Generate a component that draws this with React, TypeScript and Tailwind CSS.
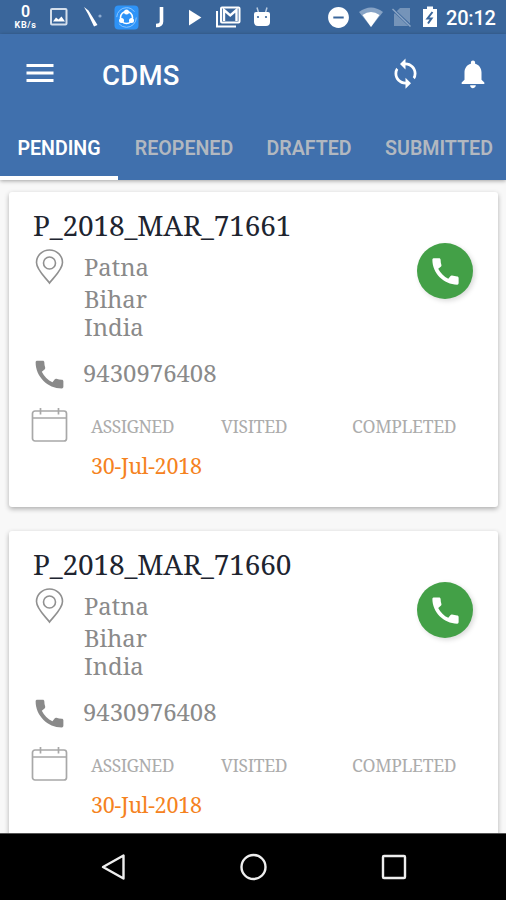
import React from 'react';
import { MdCall, MdMenu, MdNotifications, MdSync, MdPlayArrow, MdDoNotDisturbOn } from 'react-icons/md';

interface Visit {
  id: string;
  address: string[];
  phone: string;
  assigned: string;
}

const visits: Visit[] = [
  { id: 'P_2018_MAR_71661', address: ['Patna', 'Bihar', 'India'], phone: '9430976408', assigned: '30-Jul-2018' },
  { id: 'P_2018_MAR_71660', address: ['Patna', 'Bihar', 'India'], phone: '9430976408', assigned: '30-Jul-2018' },
];

const tabs = [
  { label: 'PENDING', width: 'w-[118px]' },
  { label: 'REOPENED', width: 'w-[132px]' },
  { label: 'DRAFTED', width: 'w-[118px]' },
  { label: 'SUBMITTED', width: 'w-[142px]' },
];

const StatusBar = () => (
  <div className="flex h-[34px] shrink-0 items-center bg-[#3a669b] text-white">
    <div className="ml-[12px] flex w-[27px] flex-col items-center font-bold">
      <span className="text-[16px] font-semibold leading-[16px]">0</span>
      <span className="text-[9px] leading-[11px] tracking-[0.6px]">KB/s</span>
    </div>
    <svg className="ml-[10px] h-[20px] w-[20px]" viewBox="0 0 20 20">
      <rect x="2" y="2" width="15.5" height="15.5" rx="1" fill="none" stroke="#d3deeb" strokeWidth="2" />
      <path d="M4 14.500l3-4 2.500 2 3-3 3.500 5z" fill="#fff" />
    </svg>
    <svg className="ml-[14px] h-[22px] w-[20px]" viewBox="0 0 20 22">
      <path d="M1 1l4.500 3.500 9 14.500-3.500 1.500L5 8z" fill="#fff" />
      <circle cx="17" cy="10" r="1.600" fill="#8eabd0" />
    </svg>
    <svg className="ml-[11px] h-[25px] w-[25px]" viewBox="0 0 25 25">
      <rect x="0.500" y="0.500" width="24" height="24" rx="4" fill="#2e93f7" />
      <circle cx="12.500" cy="12.500" r="9.800" fill="none" stroke="#8cc6ff" strokeWidth="1" strokeDasharray="24 7" />
      <circle cx="12.500" cy="12.500" r="6" fill="none" stroke="#fff" strokeWidth="1.600" />
      <circle cx="12.500" cy="7" r="2.500" fill="#fff" />
      <circle cx="7.500" cy="15.500" r="2.500" fill="#fff" />
      <circle cx="17.500" cy="15.500" r="2.500" fill="#fff" />
    </svg>
    <svg className="ml-[16px] h-[22px] w-[10px]" viewBox="0 0 10 22">
      <path d="M6.500 1v14.500q0 4-5.500 4" fill="none" stroke="#fff" strokeWidth="3.600" />
    </svg>
    <MdPlayArrow className="ml-[15px]" size={27} />
    <svg className="ml-[8px] h-[22px] w-[26px]" viewBox="0 0 26 22">
      <path d="M2 5v15.500H21" fill="none" stroke="#fff" strokeWidth="2" />
      <rect x="6" y="1.500" width="18.500" height="15" rx="1" fill="none" stroke="#fff" strokeWidth="2" />
      <path d="M9 15V4l6.250 5.500L21.500 4v11" fill="none" stroke="#fff" strokeWidth="2.400" />
    </svg>
    <svg className="ml-[12px] h-[20px] w-[18px]" viewBox="0 0 18 20">
      <path d="M4 0.500l1.500 5M14 0.500l-1.500 5" stroke="#b9cbe1" strokeWidth="1.500" />
      <path d="M1 7q0-2 2-2h12q2 0 2 2v8q0 4-4 4H5q-4 0-4-4z" fill="#fff" />
      <circle cx="5" cy="10" r="1.100" fill="#3a669b" />
      <circle cx="13" cy="10" r="1.100" fill="#3a669b" />
    </svg>
    <MdDoNotDisturbOn className="ml-[55px]" size={25} />
    <svg className="ml-[7px] h-[20px] w-[26px]" viewBox="0 0 26 20">
      <path d="M1 5Q13-4 25 5L13 20z" fill="#87a3c5" />
      <path d="M4.500 8Q13 2 21.500 8L13 20z" fill="#fff" />
    </svg>
    <svg className="ml-[8px] h-[21px] w-[20px]" viewBox="0 0 20 21">
      <path d="M8 1h10v18H2V7z" fill="#7594b9" />
      <path d="M1 2.500l18 17" stroke="#3a669b" strokeWidth="3" />
      <path d="M0.500 2l18 17.500" stroke="#8ca6c6" strokeWidth="1.500" />
    </svg>
    <svg className="ml-[10px] h-[22px] w-[16px]" viewBox="0 0 16 22">
      <path d="M5 0.500h6v2.500h4v18H1V3h4z" fill="#fff" />
      <path d="M10.500 6l-5 6.500h4l-3.500 5" fill="none" stroke="#3a669b" strokeWidth="2" />
    </svg>
    <span className="ml-[8px] mt-[2px] text-[20px] font-medium leading-none tracking-[-0.2px]">20:12</span>
  </div>
);

const Header = () => (
  <header className="relative z-10 shrink-0 bg-[#4070ad] text-white shadow-[0_1px_4px_rgba(0,0,0,0.35)]">
    <div className="flex h-[81px] items-center pl-[22px] pr-[16px]">
      <button className="mt-[-4px]">
        <MdMenu size={36} />
      </button>
      <h1 className="ml-[44px] mt-[2px] text-[27.500px] font-medium leading-none tracking-[0.3px]">CDMS</h1>
      <button className="ml-auto mt-[-2px]">
        <MdSync size={33} />
      </button>
      <button className="ml-[34px] mt-[-2px]">
        <MdNotifications size={34} />
      </button>
    </div>
    <nav className="flex h-[65px] overflow-hidden">
      {tabs.map((tab, i) => (
        <button
          key={tab.label}
          className={`${tab.width} flex shrink-0 items-center justify-center border-b-4 pt-[7px] text-[19.600px] font-semibold ${
            i === 0 ? 'border-white text-white' : 'border-transparent text-[#b2b8c0]'
          }`}
        >
          {tab.label}
        </button>
      ))}
    </nav>
  </header>
);

const VisitCard: React.FC<{ visit: Visit }> = ({ visit }) => (
  <article className="h-[315px] shrink-0 rounded-[3px] bg-white pl-[22px] pr-[25px] pt-[16px] font-['Noto_Serif','DejaVu_Serif_Condensed','DejaVu_Serif',serif] shadow-[0_2px_5px_rgba(0,0,0,0.3)]">
    <h2 className="pl-[2px] text-[28px] leading-[34px] tracking-[-0.15px] text-[#20242f]">{visit.id}</h2>
    <div className="mt-px flex h-[106px] text-[#8a8a8a]">
      <svg className="ml-[4px] mt-[6px] h-[36px] w-[29px]" viewBox="0 0 29 36" fill="none" stroke="#909090" strokeWidth="1.600">
        <path d="M14.500 34C11 29 1.500 21 1.500 13.500a13 12.500 0 0 1 26 0C27.500 21 18 29 14.500 34z" />
        <circle cx="14.500" cy="14" r="6" />
      </svg>
      <div className="ml-[20px] pt-[10px] text-[23.800px] leading-[28px]">
        {visit.address.map((line, i) => (
          <p key={line} className={i === 0 ? 'mb-[4px]' : ''}>
            {line}
          </p>
        ))}
      </div>
      <button className="ml-auto flex h-[56px] w-[56px] items-center justify-center rounded-full bg-[#43a047] text-white shadow-[2px_2px_5px_rgba(0,0,0,0.15)]">
        <MdCall size={35} />
      </button>
    </div>
    <div className="flex h-[50px] items-center text-[#8a8a8a]">
      <MdCall size={37} className="mt-[1px]" />
      <span className="-mt-[2px] ml-[15px] text-[23.900px]">{visit.phone}</span>
    </div>
    <div className="flex text-[#acacac]">
      <svg className="mt-[8px] h-[36px] w-[38px]" viewBox="0 0 38 36" fill="none" stroke="#a8a8a8" strokeWidth="1.700">
        <rect x="1.500" y="4" width="34" height="30" rx="2.500" />
        <path d="M1.500 11h34M9.500 1v6.500M27.500 1v6.500" />
      </svg>
      <div className="ml-[22px] flex pt-[16px] text-[17.500px] leading-[22px]">
        <span className="w-[130px] tracking-[-0.55px]">ASSIGNED</span>
        <span className="w-[131px] tracking-[-0.35px]">VISITED</span>
        <span className="tracking-[-0.3px]">COMPLETED</span>
      </div>
    </div>
    <p className="ml-[60px] mt-[9px] text-[21.500px] leading-[28px] tracking-[-0.25px] text-[#f58220]">{visit.assigned}</p>
  </article>
);

const NavigationBar = () => (
  <footer className="flex h-[67px] shrink-0 items-center justify-between border-t border-[#555] bg-black px-[99px]">
    <svg width="28" height="30" viewBox="0 0 28 30" fill="none" stroke="#eee" strokeWidth="2.400">
      <path d="M24.500 3.500v23L4 15z" strokeLinejoin="round" />
    </svg>
    <svg width="28" height="28" viewBox="0 0 28 28" fill="none" stroke="#eee" strokeWidth="2.400">
      <circle cx="13.500" cy="14" r="12" />
    </svg>
    <svg width="26" height="26" viewBox="0 0 26 26" fill="none" stroke="#eee" strokeWidth="2.400">
      <rect x="2" y="2" width="22" height="22" rx="1" />
    </svg>
  </footer>
);

const App: React.FC = () => (
  <div className="flex h-[900px] w-[506px] flex-col overflow-hidden bg-[#f8f8f8] font-['Roboto',sans-serif]">
    <StatusBar />
    <Header />
    <main className="flex min-h-0 flex-1 flex-col gap-[24px] overflow-hidden pl-[9px] pr-[8px] pt-[12px]">
      {visits.map((visit) => (
        <VisitCard key={visit.id} visit={visit} />
      ))}
    </main>
    <NavigationBar />
  </div>
);

export default App;
